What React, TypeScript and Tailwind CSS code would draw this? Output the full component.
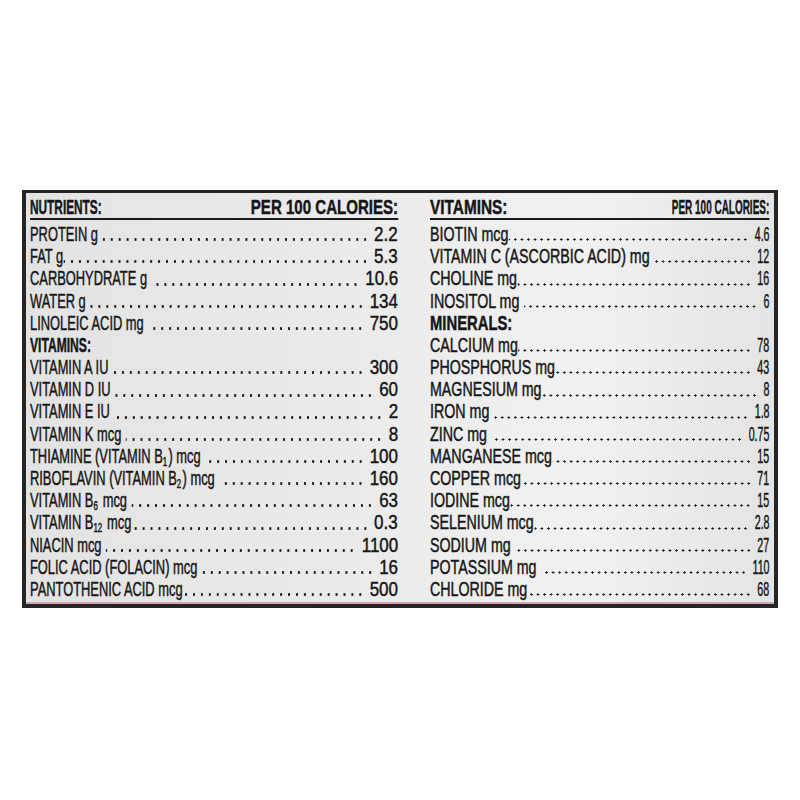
import React from 'react'

type Row = {
  l?: string
  s?: string
  t?: string
  v?: string
  h?: string
  sp?: boolean
}

const LEFT: Row[] = [
  { l: 'PROTEIN g', v: '2.2', sp: true },
  { l: 'FAT g', v: '5.3' },
  { l: 'CARBOHYDRATE g', v: '10.6', sp: true },
  { l: 'WATER g', v: '134' },
  { l: 'LINOLEIC ACID mg', v: '750', sp: true },
  { h: 'VITAMINS:' },
  { l: 'VITAMIN A IU', v: '300', sp: true },
  { l: 'VITAMIN D IU', v: '60', sp: true },
  { l: 'VITAMIN E IU', v: '2', sp: true },
  { l: 'VITAMIN K mcg', v: '8', sp: true },
  { l: 'THIAMINE (VITAMIN B', s: '1', t: ') mcg', v: '100', sp: true },
  { l: 'RIBOFLAVIN (VITAMIN B', s: '2', t: ') mcg', v: '160', sp: true },
  { l: 'VITAMIN B', s: '6', t: ' mcg', v: '63', sp: true },
  { l: 'VITAMIN B', s: '12', t: ' mcg', v: '0.3' },
  { l: 'NIACIN mcg', v: '1100', sp: true },
  { l: 'FOLIC ACID (FOLACIN) mcg', v: '16' },
  { l: 'PANTOTHENIC ACID mcg', v: '500' },
]

const RIGHT: Row[] = [
  { l: 'BIOTIN mcg', v: '4.6' },
  { l: 'VITAMIN C (ASCORBIC ACID) mg', v: '12', sp: true },
  { l: 'CHOLINE mg', v: '16' },
  { l: 'INOSITOL mg', v: '6', sp: true },
  { h: 'MINERALS:' },
  { l: 'CALCIUM mg', v: '78' },
  { l: 'PHOSPHORUS mg', v: '43' },
  { l: 'MAGNESIUM mg', v: '8' },
  { l: 'IRON mg', v: '1.8', sp: true },
  { l: 'ZINC mg', v: '0.75', sp: true },
  { l: 'MANGANESE mcg', v: '15' },
  { l: 'COPPER mcg', v: '71' },
  { l: 'IODINE mcg', v: '15' },
  { l: 'SELENIUM mcg', v: '2.8' },
  { l: 'SODIUM mg', v: '27', sp: true },
  { l: 'POTASSIUM mg', v: '110', sp: true },
  { l: 'CHLORIDE mg', v: '68' },
]

// numerals are all 0.556em in Liberation Sans, the point 0.278em
function Val({ v, k, cls }: { v: string; k: number; cls: string }) {
  const w = [...v].reduce((a, c) => a + (c === '.' ? 0.278 : 0.556), 0)
  return (
    <span
      className={`inline-block whitespace-nowrap shrink-0 ${cls}`}
      style={{ marginLeft: `${(w * (k - 1)).toFixed(3)}em` }}
    >
      {v}
    </span>
  )
}

type ColProps = {
  rows: Row[]
  outer: string
  inner: string
  dots: string
  k: number
  valCls: string
  title: string
  titleCls: string
  per: string
  subCls: string
}

function Column({ rows, outer, inner, dots, k, valCls, title, titleCls, per, subCls }: ColProps) {
  return (
    <div className={`${outer} shrink-0`}>
      <div className={inner}>
        {/* header */}
        <div className="flex justify-between items-end leading-[22px] border-b-[2.5px] border-[#1a1a1a] font-bold">
          <span className={`inline-block whitespace-nowrap ${titleCls}`}>{title}</span>
          <span className={`inline-block whitespace-nowrap ${per}`}>PER 100 CALORIES:</span>
        </div>

        <div className="flex flex-col mt-[3px]">
          {rows.map((r, i) =>
            r.h ? (
              <div key={i} className="h-[22.2px] leading-[22.2px] font-bold">
                <span className={`inline-block whitespace-nowrap ${subCls}`}>{r.h}</span>
              </div>
            ) : (
              <div key={i} className="flex items-end h-[22.2px] leading-[22.2px]">
                <span className="inline-block whitespace-nowrap shrink-0">
                  {r.l}
                  {r.s && <sub className="text-[12px] mr-[2px]">{r.s}</sub>}
                  {r.t}
                </span>
                <span
                  className={`flex-1 self-end h-[3px] mb-[4px] mr-[8px] ${dots} ${r.sp ? 'ml-[7px]' : 'ml-[1px]'}`}
                />
                <Val v={r.v || ''} k={k} cls={valCls} />
              </div>
            )
          )}
        </div>
      </div>
    </div>
  )
}

export default function App() {
  return (
    <div className="w-[800px] h-[800px] bg-white pt-[190px] pl-[22px] font-['Liberation_Sans',Arial,sans-serif] text-[19.5px] text-[#161616] [-webkit-text-stroke:0.45px_#161616]">
      <div className="w-[756px] h-[418px] bg-[#252525] pt-[3px] px-[4px] pb-[4px]">
        <div className="h-full flex gap-[32px] pl-[4px] pt-[3px] border-b-2 border-[#d3a4ac] bg-[linear-gradient(90deg,#e3e3e3,#e9e9e9_35%,#eeeeee_60%,#f1f1f1_75%,#e4e4e4)] overflow-hidden">
          <Column
            rows={LEFT}
            outer="w-[368px]"
            inner="w-[557.6px] origin-left scale-x-[0.66]"
            dots="bg-[radial-gradient(ellipse_2.2px_1.5px_at_50%_50%,#161616_70%,transparent_100%)] bg-[length:12px_3px] bg-repeat-x bg-[position:right_center]"
            k={1.32}
            valCls="origin-right scale-x-[1.32]"
            title="NUTRIENTS:"
            titleCls="origin-left scale-x-[0.92]"
            per="origin-right scale-x-[1.17]"
            subCls="origin-left scale-x-[0.94]"
          />
          <Column
            rows={RIGHT}
            outer="w-[339px]"
            inner="w-[465px] origin-left scale-x-[0.73]"
            dots="bg-[radial-gradient(ellipse_1.8px_1.3px_at_50%_50%,#161616_70%,transparent_100%)] bg-[length:9px_3px] bg-repeat-x bg-[position:right_center]"
            k={0.75}
            valCls="origin-right scale-x-[0.75]"
            title="VITAMINS:"
            titleCls="origin-left scale-x-[1.08]"
            per="origin-right scale-x-[0.7]"
            subCls="origin-left scale-x-[1.04]"
          />
        </div>
      </div>
    </div>
  )
}
